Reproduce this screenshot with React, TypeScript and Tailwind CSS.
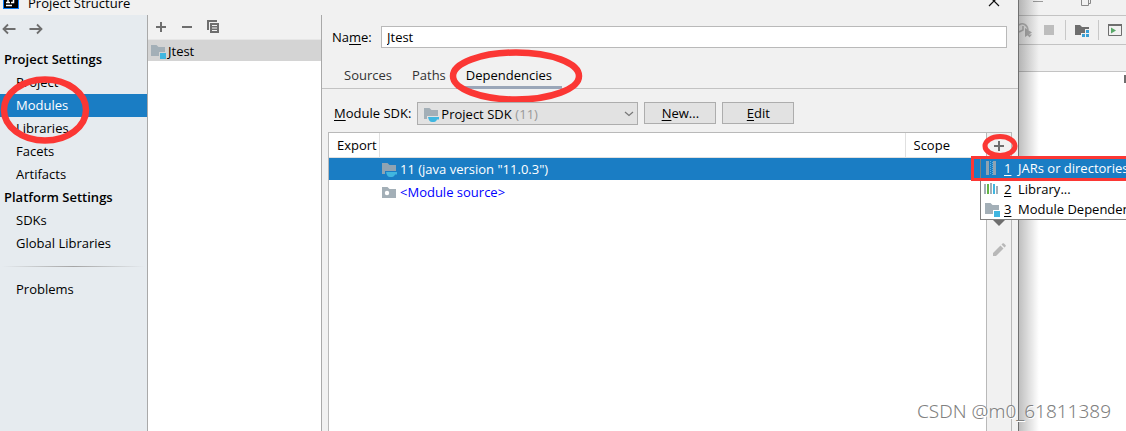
import type { ReactNode } from "react";

function Folder({ badge, color = "#a3afb7" }: { badge?: "module" | "jdk" | "source"; color?: string }) {
  return (
    <svg width="16" height="16" viewBox="0 0 16 16" className="shrink-0" aria-hidden="true">
      {badge === "module" && (
        <>
          <path d="M1 2h5.500l2 2H15v5H9v4H1z" fill={color} />
          <path d="M10 10h6v6h-6z" fill="#40b6e0" />
        </>
      )}
      {badge === "jdk" && (
        <>
          <path d="M1 2h5.500l2 2H15v6H4v3H1z" fill={color} />
          <path d="M5 11h11v2.500h-2c-.6 1.300-1.500 2.500-3 2.500H9c-2 0-3.500-2-4-5z" fill="#40b6e0" />
        </>
      )}
      {badge === "source" && (
        <>
          <path d="M1 3h5.500l2 2H15v9H1z" fill={color} />
          <circle cx="6" cy="9" r="2.200" fill="#fff" />
        </>
      )}
    </svg>
  );
}

function Arrow({ flip }: { flip?: boolean }) {
  return (
    <svg width="14" height="12" viewBox="0 0 14 12" fill="none" stroke="#6e6e6e" strokeWidth="1.800" className={flip ? "rotate-180" : ""} aria-hidden="true">
      <path d="M13.500 6H1.500M6 1.500 1.500 6 6 10.500" />
    </svg>
  );
}

function Plus() {
  return (
    <svg width="12" height="12" viewBox="0 0 12 12" className="shrink-0" aria-hidden="true">
      <path d="M5 1h2v4h4v2H7v4H5V7H1V5h4z" fill="#6e6e6e" />
    </svg>
  );
}

function NavItem({ children, active }: { children: ReactNode; active?: boolean }) {
  return (
    <a href="#" className={active ? "block bg-[#1a7dc4] pl-4 leading-[23px] text-white" : "block pl-4 leading-[23px]"}>
      {children}
    </a>
  );
}

function Sidebar() {
  return (
    <nav className="w-[148px] shrink-0 border-r border-[#a9a9a9] bg-[#e6ebef]">
      <div className="flex h-[33px] items-start gap-[13px] pl-[2px] pt-2">
        <button aria-label="Back"><Arrow /></button>
        <button aria-label="Forward"><Arrow flip /></button>
      </div>
      <h2 className="pl-1 font-semibold leading-[23px]">Project Settings</h2>
      <NavItem>Project</NavItem>
      <NavItem active>Modules</NavItem>
      <NavItem>Libraries</NavItem>
      <NavItem>Facets</NavItem>
      <NavItem>Artifacts</NavItem>
      <h2 className="pl-1 font-semibold leading-[23px]">Platform Settings</h2>
      <NavItem>SDKs</NavItem>
      <NavItem>Global Libraries</NavItem>
      <div className="mx-0.5 my-[11px] h-px bg-linear-to-r from-transparent via-[#a5a5a5] to-transparent" />
      <NavItem>Problems</NavItem>
    </nav>
  );
}

function ModuleList() {
  return (
    <section className="w-[173px] shrink-0 bg-white">
      <div className="flex h-[25px] items-center gap-[14px] border-b border-[#e6e6e6] bg-[#f1f1f1] pl-[7px]">
        <button aria-label="Add module"><Plus /></button>
        <button aria-label="Remove module">
          <svg width="12" height="12" viewBox="0 0 12 12" aria-hidden="true"><path d="M1 5h10v2H1z" fill="#6e6e6e" /></svg>
        </button>
        <button aria-label="Copy module">
          <svg width="14" height="14" viewBox="0 0 14 14" aria-hidden="true">
            <path d="M0 0h10v2H2v8H0z" fill="#6e6e6e" />
            <path d="M3 3h9v10H3z" fill="#6e6e6e" />
            <path d="M5 5.500h5M5 8h5M5 10.500h5" stroke="#f1f1f1" />
          </svg>
        </button>
      </div>
      <div className="flex h-[21px] items-center gap-0.5 bg-[#d4d4d4] pl-0.5">
        <Folder badge="module" />
        <span>Jtest</span>
      </div>
    </section>
  );
}

function LibraryMenu() {
  return (
    <ul role="menu" className="absolute left-[-7px] top-[24px] z-20 w-[200px] border border-[#808080] bg-white text-black">
      <li role="menuitem" className="flex h-5 items-center gap-1 bg-[#1a7dc4] pl-[3px] text-white">
        <svg width="16" height="16" viewBox="0 0 16 16" className="shrink-0" aria-hidden="true">
          <path d="M2 1h3v14H2zM9 1h3v14H9z" fill="#8fa3b2" />
          <path d="M6.500 1v14M8.500 2v13" stroke="#5cb2e0" strokeDasharray="1 1" />
        </svg>
        <u className="w-[10px] underline-offset-2">1</u>
        <span className="whitespace-nowrap">JARs or directories...</span>
      </li>
      <li role="menuitem" className="flex h-[21px] items-center gap-1 pl-[3px]">
        <svg width="16" height="16" viewBox="0 0 16 16" className="shrink-0" aria-hidden="true">
          <path d="M0 3h2v10H0zM6 2h2v11H6zM12 5h2v8h-2z" fill="#a3afb7" />
          <path d="M3 3h2v10H3z" fill="#62b543" />
          <path d="M9 3h2v10H9z" fill="#40b6e0" />
        </svg>
        <u className="w-[10px] underline-offset-2">2</u>
        <span className="whitespace-nowrap">Library...</span>
      </li>
      <li role="menuitem" className="flex h-5 items-center gap-1 pl-[3px]">
        <Folder badge="module" />
        <u className="w-[10px] underline-offset-2">3</u>
        <span className="whitespace-nowrap">Module Dependency...</span>
      </li>
      <li aria-hidden="true" className="absolute left-[-10px] top-[-2px] h-[25px] w-[220px] border-[3px] border-[#fb3734]" />
    </ul>
  );
}

function Dependencies() {
  return (
    <div className="mx-1.5 mt-[7px] flex grow border border-b-0 border-[#b9b9b9]">
      <div className="grow bg-white">
        <table className="w-full table-fixed border-collapse text-left">
          <colgroup>
            <col className="w-[50px]" />
            <col />
            <col className="w-[81px]" />
          </colgroup>
          <thead>
            <tr className="h-6 border-b border-[#e0e0e0]">
              <th className="border-r border-[#e0e0e0] pl-2 font-normal">Export</th>
              <th className="border-r border-[#e0e0e0]" aria-label="Dependency" />
              <th className="pl-2 font-normal">Scope</th>
            </tr>
          </thead>
          <tbody>
            <tr className="h-[23px] bg-[#1a7dc4] text-white">
              <td />
              <td colSpan={2}>
                <div className="flex items-center gap-[3px] pl-[2px]"><Folder badge="jdk" color="#8fa3b2" />11 (java version "11.0.3")</div>
              </td>
            </tr>
            <tr className="h-[23px] text-[#0000ff]">
              <td />
              <td colSpan={2}>
                <div className="flex items-center gap-[3px] pl-[2px]"><Folder badge="source" />&lt;Module source&gt;</div>
              </td>
            </tr>
          </tbody>
        </table>
      </div>
      <div className="relative flex w-[25px] shrink-0 flex-col items-center border-l border-[#b9b9b9]">
        <button aria-label="Add dependency" className="relative flex h-[26px] items-center">
          <Plus />
        </button>
        <svg width="36" height="24" viewBox="0 0 36 24" className="absolute left-[-5px] top-[1px]" aria-hidden="true">
          <ellipse cx="18" cy="12" rx="15" ry="9.500" fill="none" stroke="#fb3734" strokeWidth="5" />
        </svg>
        <LibraryMenu />
        <button aria-label="Move down" className="mt-[60px]">
          <svg width="12" height="8" viewBox="0 0 12 8" aria-hidden="true"><path d="M0 1h12L6 7z" fill="#6e6e6e" /></svg>
        </button>
        <button aria-label="Edit dependency" className="mt-[15px]">
          <svg width="16" height="16" viewBox="0 0 16 16" fill="#b8b8b8" aria-hidden="true">
            <path d="m2 11 7.500-7.500 3 3L5 14H2zM10.500 2.500l1-1c.5-.5 1-.5 1.500 0L14.500 3c.5.5.5 1 0 1.500l-1 1z" />
          </svg>
        </button>
      </div>
    </div>
  );
}

function Editor() {
  return (
    <main className="flex min-w-0 grow flex-col border-l border-[#a9a9a9]">
      <div className="mt-[11px] flex items-center pl-[10px] pr-[11px]">
        <label htmlFor="name" className="w-[49px] shrink-0">Na<u className="underline-offset-2">m</u>e:</label>
        <input id="name" defaultValue="Jtest" className="h-[22px] min-w-0 grow border border-[#b9b9b9] bg-white px-[5px] outline-none" />
      </div>
      <div role="tablist" className="mt-[14px] flex h-[27px] border-b border-[#c3c3c3] pl-3 text-[#333]">
        <button role="tab" className="px-[10px]">Sources</button>
        <button role="tab" className="px-[10px]">Paths</button>
        <button role="tab" aria-selected="true" className="relative -mb-px border-b-[3px] border-[#9ba7b9] px-[10px] pt-0.5 text-black">
          Dependencies
          <svg width="134" height="56" viewBox="0 0 134 56" className="absolute left-[-7px] top-[-14px] max-w-none" aria-hidden="true">
            <ellipse cx="67" cy="28" rx="63" ry="23.500" fill="none" stroke="#fb3734" strokeWidth="6.500" />
          </svg>
        </button>
      </div>
      <div className="mt-[13px] flex items-start gap-1.5 pl-3">
        <label htmlFor="sdk" className="whitespace-nowrap leading-[23px]"><u className="underline-offset-2">M</u>odule SDK:</label>
        <div className="relative">
          <select id="sdk" className="h-[23px] w-[221px] appearance-none border border-[#adadad] bg-[#e2e2e2] pl-[23px] outline-none">
            <option>Project SDK</option>
          </select>
          <span className="pointer-events-none absolute inset-0 flex items-center justify-between pl-1.5 pr-1">
            <Folder badge="jdk" />
            <span className="mr-auto pl-[76px] text-[#999]">(11)</span>
            <svg width="10" height="6" viewBox="0 0 10 6" fill="none" stroke="#777" strokeWidth="1.200" aria-hidden="true"><path d="m1 1 4 3.500L9 1" /></svg>
          </span>
        </div>
        <button className="h-[22px] w-[72px] border border-[#adadad] bg-[#e2e2e2]"><u className="underline-offset-2">N</u>ew...</button>
        <button className="h-[22px] w-[72px] border border-[#adadad] bg-[#e2e2e2]"><u className="underline-offset-2">E</u>dit</button>
      </div>
      <Dependencies />
    </main>
  );
}

function IdeWindow() {
  return (
    <aside className="relative flex w-[107px] shrink-0 flex-col overflow-hidden bg-white">
      <div className="flex h-4 shrink-0 items-start gap-9 border-b border-[#c3c3c3] bg-[#f1f1f1] pl-[14px]">
        <svg width="12" height="6" aria-hidden="true"><path d="M0 1.500h10" stroke="#999" /></svg>
        <svg width="12" height="6" aria-hidden="true"><path d="M.5 0v5.500h7V0M7.500 3.500h2V0" fill="none" stroke="#888" /></svg>
      </div>
      <div className="flex h-[29px] shrink-0 items-center border-b border-[#c3c3c3] bg-[#f1f1f1]">
        <svg width="13" height="16" viewBox="0 0 13 16" aria-hidden="true">
          <path d="M0 3c4-3 8.500 0 9 5M4 4v4L0 10" fill="none" stroke="#b8b8b8" strokeWidth="1.600" />
          <path d="m6 6 7 4.500L6 15zM8 12.500h5l-2.500 3z" fill="#b0b0b0" />
        </svg>
        <span className="ml-3 h-[10px] w-[10px] bg-[#bdbdbd]" />
        <span className="ml-[11px] h-5 w-px bg-[#c8c8c8]" />
        <svg width="16" height="16" viewBox="0 0 16 16" className="ml-2" aria-hidden="true">
          <path d="M1 3h5l2 2h7v2H11v4H7v2H1z" fill="#6e6e6e" />
          <path d="M12 8h3v3h-3zM8 12h3v3H8zM12 12h3v3h-3z" fill="#389fd6" />
        </svg>
        <span className="ml-2 h-5 w-px bg-[#c8c8c8]" />
        <svg width="16" height="16" viewBox="0 0 16 16" className="ml-2" aria-hidden="true">
          <path d="M1.500 2.500h13v11h-13z" fill="none" stroke="#6e6e6e" />
          <path d="M1 2h14v2H1z" fill="#6e6e6e" />
          <path d="m4 5.500 5 3-5 3z" fill="#59a869" />
        </svg>
      </div>
      <div className="flex h-[27px] shrink-0 border-b border-[#c3c3c3] bg-[#f1f1f1]" />
      <span className="mt-[3px] h-2 w-0.5 self-end bg-[#6e6e6e]" />
      <span className="absolute inset-y-0 left-0 w-5 bg-linear-to-r from-black/25 to-transparent" />
    </aside>
  );
}

export default function App() {
  return (
    <div className="relative flex min-h-screen overflow-hidden bg-[#f1f1f1] font-['Open_Sans','Noto_Sans_CJK_SC',sans-serif] text-[13px] leading-4 text-black">
      <div className="flex min-w-0 grow flex-col border-r border-[#707070]">
        <header className="flex h-[15px] shrink-0 items-end overflow-hidden">
          <svg width="16" height="16" viewBox="0 0 16 16" className="mb-1.5 ml-[3px] shrink-0" aria-hidden="true">
            <path d="M0 0h16v16H0z" fill="#087cfa" />
            <path d="M1 1h14v14H1z" fill="#000" />
            <path d="M3 12.500h6M3 9.500h4M5 4v5M8 9.500h2.500V4" fill="none" stroke="#fff" strokeWidth="1.500" />
          </svg>
          <h1 className="mb-1 ml-[9px]">Project Structure</h1>
          <button aria-label="Close" className="ml-auto mr-[18px] pb-2">
            <svg width="12" height="12" viewBox="0 0 12 12" aria-hidden="true"><path d="m1 1 10 10M11 1 1 11" stroke="#111" strokeWidth="1.200" /></svg>
          </button>
        </header>
        <div className="flex grow">
          <Sidebar />
          <ModuleList />
          <Editor />
        </div>
      </div>
      <IdeWindow />
      <svg width="92" height="70" viewBox="0 0 92 70" className="absolute left-0 top-[75px]" aria-hidden="true">
        <ellipse cx="45" cy="35" rx="41" ry="30.500" fill="none" stroke="#fb3734" strokeWidth="6.500" />
      </svg>
      <p className="absolute bottom-2 right-[15px] z-30 font-['Noto_Sans'] text-[19px] font-light leading-6 text-[#808080] text-shadow-[1px_1px_0_#ffffff]">CSDN @m0_61811389</p>
    </div>
  );
}
